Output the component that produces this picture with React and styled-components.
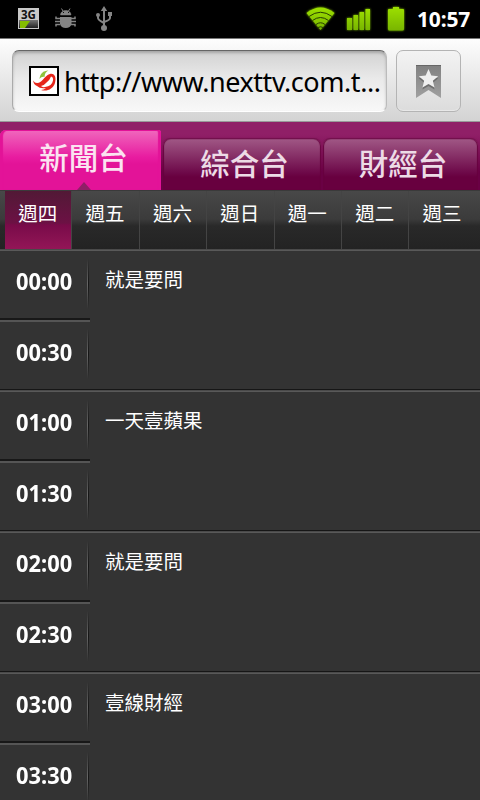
import React from 'react';
import styled, { createGlobalStyle } from 'styled-components';

const GlobalStyle = createGlobalStyle`
  body {
    margin: 0;
    background: #333;
    font-family: 'Noto Sans', 'Noto Sans CJK TC', sans-serif;
  }
`;

const Screen = styled.div`
  width: 480px;
  height: 800px;
  overflow: hidden;
  background: #333;
`;

const StatusBar = styled.div`
  display: flex;
  box-sizing: border-box;
  height: 39px;
  background: #000;
  border-bottom: 1px solid #777;
`;

const StatusIcons = styled.svg`
  display: block;
  flex: none;
`;

const Clock = styled.div`
  width: 63px;
  color: #fff;
  font-size: 21px;
  font-weight: 700;
  line-height: 38px;
  letter-spacing: -0.15px;
  white-space: nowrap;
`;

const AddressBar = styled.div`
  display: flex;
  box-sizing: border-box;
  height: 83px;
  padding: 11px 19px 10px 12px;
  gap: 9px;
  background: linear-gradient(#fdfdfd, #d3d3d3);
  border-bottom: 1px solid #999;
`;

const UrlField = styled.div`
  display: flex;
  align-items: center;
  box-sizing: border-box;
  width: 375px;
  height: 62px;
  padding-left: 16px;
  gap: 5px;
  border: 1px solid;
  border-color: #666 #bbb #fff #aaa;
  border-radius: 7px;
  background: linear-gradient(#d2d2d2, #e9e9e9 45%, #f8f8f8);
  box-shadow: inset 0 2px 3px rgba(0, 0, 0, 0.22);
`;

const Url = styled.span`
  padding-top: 2px;
  color: #000;
  font-size: 27px;
  line-height: 58px;
  letter-spacing: -0.45px;
  white-space: nowrap;
`;

const BookmarkButton = styled.button`
  display: flex;
  justify-content: center;
  align-items: center;
  box-sizing: border-box;
  width: 65px;
  height: 62px;
  padding: 0;
  border: 1px solid #b4b4b4;
  border-radius: 7px;
  background: linear-gradient(#f3f3f3, #dcdcdc);
  box-shadow: inset 0 -1px 0 #e8e8e8;
`;

const Channels = styled.nav`
  display: flex;
  align-items: flex-end;
  height: 68px;
  background: linear-gradient(#901f67 0, #901f67 12px, #6a0044 50px);
`;

const Channel = styled.div`
  display: flex;
  flex-direction: column;
  align-items: center;
  box-sizing: border-box;
  width: ${props => props.$width}px;
  height: ${props => (props.$active ? 60 : 51)}px;
  padding-left: ${props => props.$shift}px;
  margin-right: 2px;
  flex: none;
  color: ${props => (props.$active ? '#fbe3f1' : '#eddbe6')};
  font-size: 29.5px;
  font-weight: 500;
  line-height: ${props => (props.$active ? 56 : 49)}px;
  border-radius: ${props => (props.$active ? '6px 3px 0 0' : '7px 7px 0 0')};
  background: ${props =>
    props.$active
      ? 'linear-gradient(#f068bd, #e81ca0 27px, #e31398 34px)'
      : 'linear-gradient(#a05785, #6d0848 34px, #68003f 38px)'};
  box-shadow: ${props =>
    props.$active
      ? 'inset 3px 0 1px #e31398, inset -3px 0 1px #e31398, inset 0 1px 0 #e31398'
      : 'inset 1px 0 1px #68003f, inset -1px 0 1px #68003f, 0 -1px 1px #70104b'};
`;

const Pointer = styled.div`
  width: 0;
  height: 0;
  margin-top: -4px;
  border: 7px solid transparent;
  border-top: 0;
  border-bottom: 8px solid #901f67;
`;

const Days = styled.nav`
  display: flex;
  box-sizing: border-box;
  height: 59px;
  padding-left: 5px;
  background: linear-gradient(#484848, #3b3b3b 28px, #292929 35px, #232323);
  border-top: 1px solid #3a3a3a;
`;

const Day = styled.div`
  box-sizing: border-box;
  flex: none;
  width: 67.4px;
  padding-right: 1px;
  border-right: 1px solid #444;
  color: #fff;
  font-size: 19.5px;
  line-height: 46px;
  text-align: center;
  background: ${props =>
    props.$active
      ? 'linear-gradient(#521936, #6c1144 32px, #790b49 34px, #931657)'
      : 'none'};

  &:last-child {
    border-right-color: transparent;
  }
`;

const Block = styled.section`
  display: flex;
  box-sizing: border-box;
  height: 141px;
  border-top: 1px solid #4a4a4a;
  border-bottom: 1px solid #161616;
  box-shadow: inset 0 1px 0 #595959;
`;

const Times = styled.div`
  display: flex;
  flex-direction: column;
  width: 90px;
`;

const Slot = styled.div`
  display: flex;
  align-items: center;
  box-sizing: border-box;
  height: 70px;
  padding-left: 16px;
  border-bottom: ${props => (props.$last ? 0 : '2px solid #181818')};
  box-shadow: ${props => (props.$last ? 'inset 0 2px 0 #555' : 'none')};
`;

const Time = styled.span`
  width: 71px;
  padding-bottom: 5px;
  color: #fff;
  font-size: 23.5px;
  font-weight: 700;
  line-height: 30px;
  transform: scaleX(0.93);
  transform-origin: 0 0;
`;

const Divider = styled.i`
  width: 2px;
  height: 50px;
  background:
    linear-gradient(transparent, #666, transparent) 0 0 / 1px 100% no-repeat,
    linear-gradient(transparent, #151515, transparent) 1px 0 / 1px 100% no-repeat;
`;

const Title = styled.div`
  padding-left: 15px;
  color: #fff;
  font-size: 19.5px;
  line-height: 60px;
`;

const days = ['週四', '週五', '週六', '週日', '週一', '週二', '週三'];

const programs = [
  { hour: '00', title: '就是要問' },
  { hour: '01', title: '一天壹蘋果' },
  { hour: '02', title: '就是要問' },
  { hour: '03', title: '壹線財經' },
];

const Notifications = () => (
  <StatusIcons width="300" height="38">
    <defs>
      <linearGradient id="net" x2="0" y2="1">
        <stop offset="0" stopColor="#777" />
        <stop offset="1" stopColor="#222" />
      </linearGradient>
    </defs>
    <rect x="18" y="8" width="21" height="21" fill="#c9c9c9" />
    <rect x="19" y="20" width="19" height="8" fill="url(#net)" />
    <path d="M20 21h10l-5 7h-5z" fill="#83bd00" />
    <text x="28.500" y="18.500" textAnchor="middle" fontSize="11.500" fontWeight="700" fill="#111">3G</text>
    <g fill="#858585" stroke="#858585">
      <path d="M60.500 15c0-6 10.500-6 10.500 0z" strokeWidth="0.500" />
      <path d="M63 11l-1.500-2.500M68.500 11l1.500-2.500" strokeWidth="1" />
      <path d="M60 18.500h-4v-2M60 21.500h-5M60 24.500h-4v2M71 18.500h4v-2M71 21.500h5M71 24.500h4v2" strokeWidth="1.500" fill="none" />
      <path d="M60 17h11.500v7q-1 4-5.700 4t-5.800-4z" stroke="none" />
    </g>
    <path d="M63 12h1v1h-1zM68 12h1v1h-1z" fill="#111" />
    <path d="M104 9v18M98 16v2q0 2 6 5M110 14v4q0 2-6 4" stroke="#858585" strokeWidth="2" fill="none" />
    <path d="M104 6l3.200 5h-6.400zM108 12h4v4h-4z" fill="#858585" />
    <circle cx="98" cy="15" r="2" fill="#858585" />
    <circle cx="104" cy="28" r="3" fill="#858585" />
  </StatusIcons>
);

const Signals = () => (
  <StatusIcons width="117" height="38" viewBox="300 0 117 38">
    <defs>
      <linearGradient id="green" x2="0" y2="1">
        <stop offset="0" stopColor="#9de000" />
        <stop offset="1" stopColor="#78b500" />
      </linearGradient>
      <filter id="glow" x="-30%" y="-30%" width="160%" height="160%">
        <feGaussianBlur stdDeviation="1.3" result="b" />
        <feMerge>
          <feMergeNode in="b" />
          <feMergeNode in="SourceGraphic" />
        </feMerge>
      </filter>
    </defs>
    <g fill="url(#green)" filter="url(#glow)">
      <path d="M320.500 30L306.500 13q14-11 28 0z" />
      <path d="M347 18h5v12h-5zM353.500 15h4.500v15h-4.500zM359.500 12h4.500v18h-4.500zM365.500 9h4.500v21h-4.500z" />
      <path d="M393 7h6v2h4q1 0 1 1v19q0 1.500-1.500 1.500h-13q-1.500 0-1.500-1.500V10q0-1 1-1h4z" />
    </g>
    <path d="M309 16.500q11.500-8.500 23 0M312.500 20.500q8-6 16 0M316 24.500q4.500-3.500 9 0M318 27.500q2.500-1.500 5 0" fill="none" stroke="#263c00" strokeWidth="1" />
  </StatusIcons>
);

const Favicon = () => (
  <svg width="30" height="30">
    <rect x="1" y="1" width="28" height="28" fill="#fff" stroke="#000" strokeWidth="2" />
    <path d="M10.500 13C11 8 14 4.500 19.500 4.500C17 6 16 7 15.500 11C14 10.500 12 11 10.500 13z" fill="#8fc43c" />
    <path d="M4 14.500Q7 19 12 15.500C15 13 17 9 21 8C26 7 27.500 12 26 17C24 23 18 26 12 24Q15 24 17 22Q11 23 8 20Q5 19 4 14.500z" fill="#e6261b" />
    <path d="M17 17Q21 14 22 10.500Q24.500 11 24 14.500Q23 20 16 21Q13 21.500 12 20Q15 19.500 17 17z" fill="#fff" />
  </svg>
);

const Bookmark = () => (
  <svg width="27" height="35">
    <defs>
      <linearGradient id="ribbon" x2="0" y2="1">
        <stop offset="0" stopColor="#808080" />
        <stop offset="1" stopColor="#a0a0a0" />
      </linearGradient>
    </defs>
    <path d="M1 1h25v33l-12.500-8L1 34z" fill="url(#ribbon)" />
    <path d="M1 1.500h25" stroke="#666" />
    <path d="M13.500 7l2.800 6.600 6.900.6-5.300 4.600 1.600 6.800-6-3.600-6 3.600 1.600-6.800-5.300-4.600 6.900-.6z" fill="#555" opacity=".6" />
    <path d="M13.500 5l2.800 6.600 6.900.6-5.300 4.600 1.600 6.800-6-3.600-6 3.600 1.600-6.800-5.300-4.600 6.900-.6z" fill="#eee" />
  </svg>
);

const ProgramBlock = ({ hour, title }) => (
  <Block>
    <Times>
      <Slot>
        <Time>{hour}:00</Time>
        <Divider />
      </Slot>
      <Slot $last>
        <Time>{hour}:30</Time>
        <Divider />
      </Slot>
    </Times>
    <Title>{title}</Title>
  </Block>
);

const App = () => (
  <Screen>
    <GlobalStyle />
    <StatusBar>
      <Notifications />
      <Signals />
      <Clock>10:57</Clock>
    </StatusBar>
    <AddressBar>
      <UrlField>
        <Favicon />
        <Url>http://www.nexttv.com.t...</Url>
      </UrlField>
      <BookmarkButton>
        <Bookmark />
      </BookmarkButton>
    </AddressBar>
    <Channels>
      <Channel $active $width={161} $shift={6}>
        新聞台
        <Pointer />
      </Channel>
      <Channel $width={158} $shift={5}>綜合台</Channel>
      <Channel $width={155} $shift={5}>財經台</Channel>
    </Channels>
    <Days>
      {days.map((day, i) => (
        <Day key={day} $active={i === 0}>
          {day}
        </Day>
      ))}
    </Days>
    {programs.map(program => (
      <ProgramBlock key={program.hour} {...program} />
    ))}
  </Screen>
);

export default App;
